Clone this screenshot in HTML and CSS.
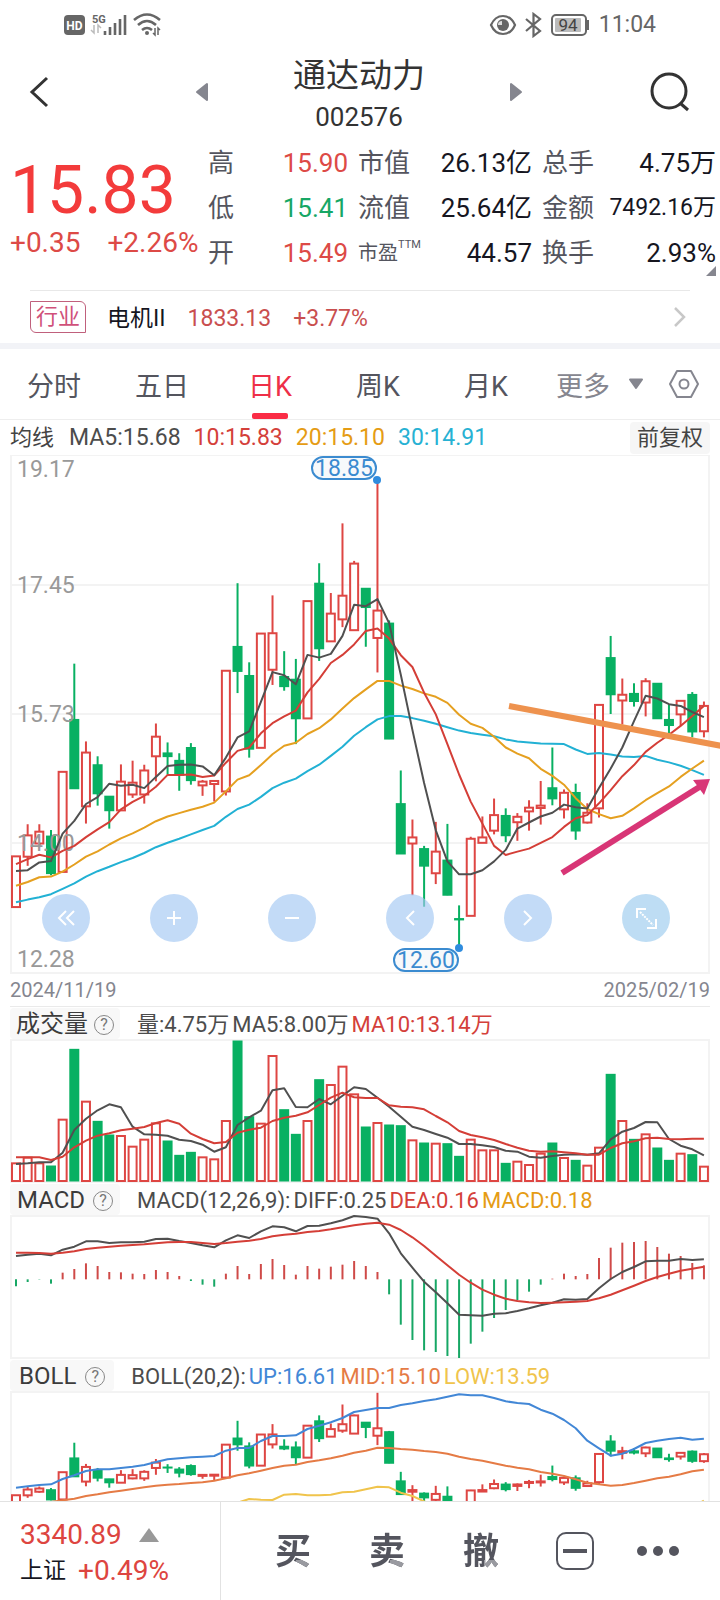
FILE: index.html
```html
<!DOCTYPE html>
<html lang="zh-CN">
<head>
<meta charset="utf-8">
<meta name="viewport" content="width=device-width, initial-scale=1">
<title>通达动力 002576</title>
<link rel="stylesheet" href="styles.css">
</head>
<body>
<div class="app">
  <div class="status">
    <svg class="status-left" viewBox="0 0 102 26" role="img" aria-label="HD 5G WiFi">
      <rect x="1" y="4" width="21" height="20" rx="4" fill="#666"/>
      <text x="11.500" y="18.500" class="hd">HD</text>
      <text x="29" y="12" class="net">5G</text>
      <path d="M31 14v8l-3-3M35 22v-8l3 3" stroke="#bbb" stroke-width="1.500" fill="none"/>
      <path d="M42 24v-4M47 24v-8M52 24V12M57 24V8M62 24V4" stroke="#666" stroke-width="2.600"/>
      <g fill="none" stroke="#666" stroke-width="2.600"><path d="M71 9q13-11 26 0"/><path d="M75 14q9-8 18 0"/><path d="M79 19q5-4 10 0"/></g>
      <circle cx="84" cy="22" r="2" fill="#666"/>
      <path d="M92 17v7l-2-2M95 24v-7l2 2" stroke="#666" stroke-width="1.500" fill="none"/>
    </svg>
    <div class="status-right">
      <svg width="100" height="26" viewBox="0 0 100 26" role="img" aria-label="94%">
        <path d="M2 13Q6 4 14 4Q22 4 26 13Q22 22 14 22Q6 22 2 13Z" fill="none" stroke="#666" stroke-width="2.200"/>
        <circle cx="14" cy="13" r="6" fill="#666"/><path d="M13 13v-4a4 4 0 0 0-4 4z" fill="#ddd"/>
        <path d="M37 7l14 12-6.500 5V2l6.500 5-14 12" fill="none" stroke="#666" stroke-width="2.200"/>
        <rect x="63" y="3" width="34" height="20" rx="4" fill="#fff" stroke="#666" stroke-width="2"/>
        <rect x="66" y="6" width="26" height="14" rx="1" fill="#bbb"/>
        <path d="M99 8v10" stroke="#666" stroke-width="2"/>
        <text x="79" y="19" class="batt">94</text>
      </svg>
      <span>11:04</span>
    </div>
  </div>

  <header class="header">
    <button class="icon-btn" aria-label="返回"><svg width="24" height="32" viewBox="0 0 24 32"><path d="M20 2L5 16l15 14" fill="none" stroke="#333" stroke-width="3"/></svg></button>
    <div class="picker">
      <button class="icon-btn" aria-label="上一只"><svg width="14" height="20" viewBox="0 0 14 20"><path d="M12 2v16L2 10z" fill="#85868f" stroke="#85868f" stroke-width="2" stroke-linejoin="round"/></svg></button>
      <div class="title"><h1>通达动力</h1><p>002576</p></div>
      <button class="icon-btn" aria-label="下一只"><svg width="14" height="20" viewBox="0 0 14 20"><path d="M2 2v16l10-8z" fill="#85868f" stroke="#85868f" stroke-width="2" stroke-linejoin="round"/></svg></button>
    </div>
    <button class="icon-btn" aria-label="搜索"><svg width="42" height="42" viewBox="0 0 42 42"><circle cx="20" cy="20" r="17" fill="none" stroke="#333" stroke-width="3"/><path d="M31 32l8 7" stroke="#333" stroke-width="3"/></svg></button>
  </header>

  <section class="quote">
    <div class="price">
      <strong>15.83</strong>
      <div class="change"><span>+0.35</span><span>+2.26%</span></div>
    </div>
    <dl class="stats">
      <div><dt>高</dt><dd class="up">15.90</dd></div>
      <div><dt>市值</dt><dd>26.13亿</dd></div>
      <div><dt>总手</dt><dd>4.75万</dd></div>
      <div><dt>低</dt><dd class="down">15.41</dd></div>
      <div><dt>流值</dt><dd>25.64亿</dd></div>
      <div><dt>金额</dt><dd class="long">7492.16万</dd></div>
      <div><dt>开</dt><dd class="up">15.49</dd></div>
      <div><dt class="small">市盈<sup>TTM</sup></dt><dd>44.57</dd></div>
      <div><dt>换手</dt><dd>2.93%</dd></div>
    </dl>
    <i class="corner"></i>
  </section>

  <a class="industry" href="#industry">
    <span class="tag">行业</span>
    <span class="info"><span class="sector">电机II</span><span>1833.13</span><span>+3.77%</span></span>
    <svg width="14" height="22" viewBox="0 0 14 22"><path d="M2 2l9 9-9 9" fill="none" stroke="#c8c8c8" stroke-width="2.500"/></svg>
  </a>

  <nav class="tabs">
    <button>分时</button><button>五日</button><button class="active">日K</button><button>周K</button><button>月K</button>
    <button class="more">更多<svg width="16" height="12" viewBox="0 0 16 12"><path d="M2 1.500h12L8 10z" fill="#85868f" stroke="#85868f" stroke-width="2" stroke-linejoin="round"/></svg></button>
    <button class="gear" aria-label="设置"><svg width="32" height="30" viewBox="0 0 32 30"><path d="M9 2h14l7 13-7 13H9L2 15z" fill="none" stroke="#85868f" stroke-width="2" stroke-linejoin="round"/><circle cx="16" cy="15" r="4.500" fill="none" stroke="#85868f" stroke-width="2"/></svg></button>
  </nav>

  <main class="charts">
    <div class="ma-row">
      <p><span class="name">均线</span><span class="dark">MA5:15.68</span><span class="red">10:15.83</span><span class="gold">20:15.10</span><span class="cyan">30:14.91</span></p>
      <button class="adjust">前复权</button>
    </div>
    <div class="kline">
      <svg id="kline" viewBox="0 455 720 519" role="img" aria-label="日K线"></svg>
      <div class="tools">
        <button aria-label="最早"><svg viewBox="0 0 48 48"><path d="M24 17l-7 7 7 7M32 17l-7 7 7 7"/></svg></button>
        <button aria-label="放大"><svg viewBox="0 0 48 48"><path d="M24 17v14M17 24h14"/></svg></button>
        <button aria-label="缩小"><svg viewBox="0 0 48 48"><path d="M17 24h14"/></svg></button>
        <button aria-label="左移"><svg viewBox="0 0 48 48"><path d="M28 17l-7 7 7 7"/></svg></button>
        <button aria-label="右移"><svg viewBox="0 0 48 48"><path d="M20 17l7 7-7 7"/></svg></button>
        <button class="full" aria-label="全屏"><svg viewBox="0 0 48 48"><path d="M15 24v-9h9M25 34h9v-9"/><path d="M18 18l13 13" stroke-width="1" stroke-dasharray="2 1"/></svg></button>
      </div>
    </div>
    <div class="dates"><time>2024/11/19</time><time>2025/02/19</time></div>

    <div class="panel-head">
      <button class="chip chip-volume">成交量<span class="help">?</span></button>
      <p><span class="dark">量:4.75万</span><span class="dark">MA5:8.00万</span><span class="red">MA10:13.14万</span></p>
    </div>
    <svg id="volume" viewBox="0 1039 720 144" role="img" aria-label="成交量"></svg>

    <div class="panel-head">
      <button class="chip">MACD<span class="help">?</span></button>
      <p><span class="dark">MACD(12,26,9):</span><span class="dark">DIFF:0.25</span><span class="red">DEA:0.16</span><span class="gold">MACD:0.18</span></p>
    </div>
    <svg id="macd" viewBox="0 1215 720 144" role="img" aria-label="MACD"></svg>

    <div class="panel-head">
      <button class="chip chip-boll">BOLL<span class="help">?</span></button>
      <p><span class="dark">BOLL(20,2):</span><span class="blue">UP:16.61</span><span class="orange">MID:15.10</span><span class="yellow">LOW:13.59</span></p>
    </div>
    <svg id="boll" viewBox="0 1391 720 144" role="img" aria-label="BOLL"></svg>
  </main>

  <footer class="bottom">
    <a class="index" href="#sh">
      <span class="row">3340.89<svg width="20" height="14" viewBox="0 0 20 14"><path d="M10 0l10 14H0z" fill="#999"/></svg></span>
      <span class="row"><b>上证</b>+0.49%</span>
    </a>
    <div class="actions">
      <button><span class="trade">买</span></button>
      <button><span class="trade">卖</span></button>
      <button><span class="trade">撤</span></button>
      <button aria-label="自选"><svg width="40" height="40" viewBox="0 0 40 40"><rect x="2" y="2" width="36" height="36" rx="9" fill="none" stroke="#54555e" stroke-width="2"/><path d="M8 20h24" stroke="#54555e" stroke-width="4"/></svg></button>
      <button aria-label="更多功能"><svg width="44" height="12" viewBox="0 0 44 12" fill="#54555e"><circle cx="6" cy="6" r="5"/><circle cx="22" cy="6" r="5"/><circle cx="38" cy="6" r="5"/></svg></button>
    </div>
  </footer>
</div>
<script src="chart.js"></script>
</body>
</html>
```

FILE: styles.css
```css
* { box-sizing: border-box; }
body { margin: 0; background: #fff; color: #333; font-family: Roboto, "Noto Sans CJK SC", sans-serif; }
h1, p, dl, dd { margin: 0; font-weight: 400; }
button { margin: 0; padding: 0; border: 0; background: none; font: inherit; color: inherit; }
a { color: inherit; text-decoration: none; }
svg { display: block; }

.app { display: flex; flex-direction: column; height: 100vh; overflow: hidden; }
.app > * { flex: none; }

.status { display: flex; justify-content: space-between; align-items: center; height: 48px; padding: 0 64px 0 63px; color: #666; }
.status-left { width: 102px; height: 26px; }
.status-right { display: flex; align-items: center; gap: 10px; font-size: 23px; line-height: 26px; padding-top: 1px; }
.hd { font: 700 12px Roboto, sans-serif; fill: #fff; text-anchor: middle; }
.net { font: 700 11px Roboto, sans-serif; fill: #666; }
.batt { font: 400 17px Roboto, sans-serif; fill: #444; text-anchor: middle; }

.header { display: grid; grid-template-columns: 1fr 328px 1fr; align-items: center; height: 93px; padding: 0 29px 0 27px; }
.header > .icon-btn:last-child { justify-self: end; }
.picker { display: flex; align-items: center; justify-content: space-between; }
.icon-btn { display: flex; align-items: center; padding-bottom: 6px; }
.title { text-align: center; }
.title h1 { font-size: 33px; line-height: 44px; font-weight: 400; color: #333; }
.title p { font-size: 26px; line-height: 38px; }

.quote { position: relative; display: flex; height: 134px; }
.price { width: 208px; padding: 12px 0 0 10px; color: #f33b3b; white-space: nowrap; }
.price strong { display: block; font-size: 66px; line-height: 76px; font-weight: 400; }
.change { display: flex; gap: 27px; font-size: 28px; line-height: 28px; color: #dd4a46; }
.stats { flex: 1; display: grid; grid-template-columns: 140fr 174fr 174fr; grid-template-rows: repeat(3, 1fr); column-gap: 10px; padding-right: 4px; }
.stats div { display: flex; align-items: center; justify-content: space-between; line-height: 32px; white-space: nowrap; }
.stats dt { font-size: 26px; color: #54555e; }
.stats dt.small { font-size: 20px; }
.stats sup { font-size: 11px; line-height: 11px; vertical-align: 12px; }
.stats dd { font-size: 26px; color: #16161f; }
.stats dd.long { font-size: 23px; }
.stats dd.up { color: #dd4a46; }
.stats dd.down { color: #17a765; }
.corner { position: absolute; right: 4px; bottom: -1px; border: 5px solid #85868f; border-top-color: transparent; border-left-color: transparent; }

.industry { display: flex; align-items: center; height: 53px; margin: 15px 30px 0; border-top: 1px solid #e8e8e8; font-size: 23px; color: #c94f4f; }
.tag { margin-right: 21px; padding: 0 5px; border: 1px solid #c0607c; border-radius: 0 6px 0 6px; font-size: 22px; line-height: 30px; color: #d0517a; }
.info { display: flex; align-items: baseline; gap: 22px; padding-top: 4px; line-height: 32px; }
.sector { font-size: 23px; color: #16161f; }
.industry svg { margin-left: auto; margin-right: 3px; }

.tabs { display: grid; grid-template-columns: repeat(5, 15%) 1fr 72px; height: 77px; border-top: 6px solid #f2f3f7; border-bottom: 1px solid #eee; font-size: 27px; color: #54555e; }
.tabs .active { position: relative; color: #ee2f48; }
.tabs .active::after { content: ""; position: absolute; left: 50%; bottom: 0; width: 36px; height: 6px; margin-left: -18px; border-radius: 2px; background: #fa2c45; }
.tabs .more { display: flex; align-items: center; gap: 18px; padding-left: 16px; color: #85868f; }
.tabs .gear { display: flex; align-items: center; justify-content: center; }

.charts { flex: 1; min-height: 0; overflow: hidden; }
.charts svg { width: 100%; }
.dark { color: #4c4c4c; }
.red { color: #d4403a; }
.gold { color: #e59c14; }
.cyan { color: #27b1d3; }
.blue { color: #4287d6; }
.orange { color: #e57b45; }
.yellow { color: #f0c44c; }

.ma-row { display: flex; align-items: center; justify-content: space-between; height: 35px; padding: 0 10px; }
.ma-row p { display: flex; align-items: baseline; gap: 13px; font-size: 23px; line-height: 32px; }
.ma-row .name { margin-right: 2px; font-size: 22px; color: #444; }
.adjust { padding: 0 7px; border-radius: 4px; background: #f6f6f6; font-size: 22px; line-height: 32px; color: #444; }

.kline { position: relative; }
.tools { position: absolute; left: 0; right: 0; bottom: 32px; height: 48px; }
.tools button { position: absolute; left: 9.1%; width: 48px; height: 48px; margin-left: -24px; border-radius: 50%; background: rgba(163, 199, 243, .65); }
.tools button:nth-child(2) { left: 24.1%; }
.tools button:nth-child(3) { left: 40.5%; }
.tools button:nth-child(4) { left: 56.9%; }
.tools button:nth-child(5) { left: 73.3%; }
.tools button:nth-child(6) { left: 89.7%; }
.tools .full { background: rgba(155, 203, 238, .65); }
.tools path { fill: none; stroke: #fff; stroke-width: 2; }

.axis { font: 23px Roboto, sans-serif; fill: #999; }
.pill { font: 23px Roboto, sans-serif; fill: #3b8bd0; text-anchor: middle; }

.dates { display: flex; justify-content: space-between; height: 33px; margin: 0 10px; border-bottom: 1px solid #eaeaea; font-size: 20px; line-height: 32px; color: #85868f; }

.panel-head { display: flex; align-items: flex-end; gap: 17px; height: 32px; padding: 0 10px; white-space: nowrap; }
.chip { display: flex; align-items: center; gap: 8px; height: 31px; padding: 2px 7px 0; border-radius: 4px; background: #f8f8f8; font-size: 24px; line-height: 29px; color: #3c3c3c; }
.chip-volume { gap: 6px; padding: 2px 6px 0; }
.chip-boll { gap: 9px; padding: 2px 9px 0; }
.help { width: 20px; height: 20px; border: 1px solid #888; border-radius: 50%; font-size: 16px; line-height: 18px; color: #777; text-align: center; }
.panel-head p { display: flex; align-items: baseline; gap: 3px; font-size: 22px; line-height: 28px; }

.bottom { display: flex; height: 99px; border-top: 1px solid #e2e2e2; background: #fff; }
.index { display: flex; flex-direction: column; justify-content: center; width: 221px; padding: 3px 0 0 20px; border-right: 1px solid #e2e2e2; color: #dd4540; }
.row { display: flex; align-items: center; gap: 12px; font-size: 28px; line-height: 36px; }
.row:first-child { gap: 17px; }
.row b { font-size: 23px; font-weight: 400; color: #16161f; }
.actions { flex: 1; display: grid; grid-template-columns: repeat(4, 94fr) 72fr; padding: 0 26px 0 25px; }
.actions button { display: flex; align-items: center; justify-content: center; }
.trade { padding-top: 2px; font-size: 36px; font-weight: 700; line-height: 42px; color: transparent; background: linear-gradient(#999aa0, #999aa0) 100% 31px / 15px 14px no-repeat, #54555e; -webkit-background-clip: text; background-clip: text; }
```

FILE: chart.js
```js
const N = 60;
const X = i => 16 + 11.66 * i;
const C = { up: '#de4643', down: '#08b062', dark: '#505050', red: '#d43e37', gold: '#e5a020', cyan: '#22b1d4', grid: '#f3f3f3' };

// high, body top, body bottom, low (distance down the price scale), direction
const candles = [
  [1202,1202,1352,1352,1],[1107,1140,1203,1230,1],[1107,1129,1164,1175,1],[1124,1142,1253,1258,0],[952,952,1248,1248,1],
  [632,797,1002,1002,0],[862,895,1054,1105,1],[906,931,1017,1052,0],[1024,1024,1067,1120,0],[930,981,1066,1066,1],
  [919,984,1019,1029,1],[931,948,1019,1046,1],[809,848,906,980,1],[865,896,907,960,0],[897,918,962,1008,0],
  [867,880,978,990,0],[976,981,992,1023,1],[979,979,988,1040,1],[653,653,1010,1022,1],[394,581,655,719,0],
  [628,667,885,910,0],[543,543,881,881,1],[430,542,650,695,1],[595,670,700,712,0],[618,678,795,870,0],
  [447,447,794,794,1],[335,394,588,624,0],[423,484,566,566,1],[217,431,501,524,1],[328,336,533,535,1],
  [409,409,466,582,0],[90,475,556,658,1],[504,512,855,855,0],[948,1046,1195,1195,0],[1093,1146,1164,1317,1],
  [1171,1179,1231,1351,0],[1100,1188,1252,1284,1],[1106,1213,1317,1317,0],[1347,1386,1390,1472,0],[1144,1150,1378,1378,1],
  [1084,1146,1162,1162,1],[1031,1080,1126,1137,1],[1060,1081,1141,1160,0],[1074,1085,1101,1156,1],[1036,1058,1069,1126,1],
  [979,1052,1059,1108,1],[880,999,1032,1051,0],[1004,1014,1063,1090,1],[987,1013,1127,1153,0],[1045,1073,1102,1105,1],
  [754,754,1060,1087,1],[550,614,724,781,0],[676,724,741,812,1],[690,720,744,759,0],[675,684,747,788,1],
  [690,690,795,795,0],[752,797,815,838,0],[742,742,782,815,1],[716,723,834,850,0],[744,757,832,850,1]
];
const ma5 = [1245,1243,1220,1216,1135,1097,1047,1027,987,993,990,1000,967,935,931,930,936,962,910,850,832,745,657,666,693,606,614,603,550,458,462,441,512,665,828,985,1125,1217,1255,1255,1243,1217,1183,1120,1102,1084,1073,1049,1057,1060,1000,942,880,802,727,735,752,757,775,790];
const ma10 = [1225,1210,1197,1205,1186,1171,1145,1122,1101,1063,1041,1023,996,961,961,960,967,963,925,890,880,838,808,788,771,717,677,630,606,575,535,528,558,607,642,718,782,870,960,1040,1105,1171,1198,1188,1179,1162,1145,1115,1089,1080,1045,1006,965,932,893,866,842,816,787,757];
const ma20 = [1289,1278,1264,1262,1247,1226,1203,1187,1167,1149,1134,1117,1098,1084,1074,1064,1055,1043,1010,975,962,932,900,875,866,840,823,797,765,734,708,683,683,697,707,720,730,748,783,810,822,848,880,898,912,943,964,990,1030,1062,1077,1089,1082,1060,1036,1015,995,967,942,919];
const ma30 = [1338,1330,1323,1314,1298,1282,1262,1246,1233,1219,1207,1192,1175,1162,1150,1137,1124,1112,1085,1062,1049,1026,1000,984,972,950,931,905,878,845,820,797,787,787,793,801,810,820,830,837,842,847,856,862,865,868,869,870,886,899,896,901,907,908,905,916,924,934,947,961];

const vol = [577,560,577,585,446,235,392,451,492,495,527,506,457,510,553,544,559,565,450,210,437,458,255,416,490,450,326,342,287,370,468,456,462,464,508,516,518,518,556,506,538,538,577,572,582,548,516,561,568,584,530,310,450,505,490,531,568,548,551,587];
const vol5 = [582,580,577,577,548,480,446,421,403,412,470,493,494,497,509,513,524,545,532,465,442,422,361,355,411,412,387,403,377,352,357,383,410,440,470,480,492,503,522,522,526,531,542,545,560,563,558,554,553,554,550,508,485,474,456,457,507,527,538,556];
const vol10 = [562,562,562,570,560,532,512,497,490,481,476,471,459,451,461,491,507,520,516,488,479,473,453,443,437,427,405,383,368,382,384,384,406,410,412,418,438,457,483,495,502,510,522,533,542,545,544,547,550,554,554,534,520,514,505,503,507,508,506,506];

const hist = [304,291,284,296,263,252,235,243,261,262,266,267,255,261,273,288,299,305,266,243,267,237,222,240,269,243,251,245,239,228,243,261,328,419,465,496,501,513,519,476,440,399,375,345,320,299,281,266,273,267,219,188,173,171,168,186,206,213,234,241];
const diff = [213,209,206,211,194,185,169,169,174,172,172,170,162,161,168,174,181,187,166,151,159,139,124,127,139,123,122,115,106,93,96,101,145,205,248,290,322,355,389,391,392,386,385,378,370,361,353,343,344,342,310,282,261,246,229,227,227,222,225,223];
const dea = [203,203,204,206,203,199,192,188,185,182,180,178,175,172,171,171,174,177,174,170,167,162,154,149,146,141,138,133,127,121,116,113,119,135,157,183,212,241,269,293,314,329,341,348,352,354,353,352,350,348,340,329,316,302,288,276,266,257,251,245];

const bUp = [383,379,375,373,357,346,333,328,328,324,320,315,306,298,295,292,290,288,272,264,264,243,228,228,226,207,197,187,174,156,150,144,144,135,130,123,118,110,103,106,106,114,124,129,132,149,161,180,205,242,265,287,281,267,249,242,237,233,239,236];
const bMid = [440,434,429,426,421,416,408,403,397,392,387,382,377,374,372,369,367,362,355,346,340,332,324,317,314,306,301,295,287,278,272,263,264,267,269,273,276,281,290,297,302,310,317,323,328,336,341,348,358,368,373,377,375,369,362,355,350,343,334,329];
const bLow = [520,515,510,506,500,495,490,485,480,475,470,465,460,456,453,450,446,440,434,428,417,419,420,404,402,406,406,404,397,395,388,380,382,398,408,424,440,460,480,500,520,530,540,545,550,550,550,550,545,540,535,530,525,515,500,485,470,455,440,422];

const line = (vals, y, color, w = 2) =>
  `<polyline fill="none" stroke="${color}" stroke-width="${w}" stroke-linejoin="round" points="${vals.map((v, i) => X(i).toFixed(1) + ',' + y(v).toFixed(1)).join(' ')}"/>`;

const bar = (x, top, bottom, up) => up
  ? `<rect x="${x - 4}" y="${top}" width="8" height="${Math.max(bottom - top, 1)}" fill="#fff" stroke="${C.up}" stroke-width="2"/>`
  : `<rect x="${x - 5}" y="${top - 0.5}" width="10" height="${Math.max(bottom - top + 1, 2)}" fill="${C.down}"/>`;

const candleMarks = y => candles.map(([h, t, b, l, up], i) =>
  `<path d="M${X(i)} ${y(h)}V${y(l)}" stroke="${up ? C.up : C.down}" stroke-width="2"/>` + bar(X(i), y(t), y(b), up)).join('');

const frame = (top, bottom) => `<rect x="11" y="${top}" width="698" height="${bottom - top}" fill="none" stroke="${C.grid}" stroke-width="2"/>`;

function drawKline() {
  const y = v => 450 + v / 2.958;
  let s = frame(455, 973);
  [585, 714, 843].forEach(g => { s += `<path d="M11 ${g}H709" stroke="${C.grid}" stroke-width="2"/>`; });
  s += candleMarks(y);
  [['19.17', 477], ['17.45', 593], ['15.73', 722], ['14.00', 851], ['12.28', 967]].forEach(([t, ty]) => {
    s += `<text class="axis" x="17" y="${ty}">${t}</text>`;
  });
  s += line(ma30, y, C.cyan) + line(ma20, y, C.gold) + line(ma10, y, C.red) + line(ma5, y, C.dark);
  [[344, 457, '18.85', 377, 480], [426, 949, '12.60', 459, 948]].forEach(([cx, top, t, dx, dy]) => {
    s += `<rect x="${cx - 32}" y="${top}" width="64" height="22" rx="11" fill="#f7f9fb" stroke="#3b8bd0" stroke-width="2"/>`
      + `<text class="pill" x="${cx}" y="${top + 19}">${t}</text><circle cx="${dx}" cy="${dy}" r="4" fill="#2f8cde"/>`;
  });
  s += '<path d="M509 706L722 746" stroke="#ee924e" stroke-width="6"/>'
    + '<path d="M562 873L701 786" stroke="#d83576" stroke-width="6"/><path d="M710 779l-17 1 11 15z" fill="#d83576"/>';
  document.getElementById('kline').innerHTML = s;
}

function drawVolume() {
  const y = v => 970 + v / 3;
  let s = frame(1040, 1182);
  for (let i = 0; i < N; i++) s += bar(X(i), y(vol[i]) + 1, 1181, candles[i][4]);
  document.getElementById('volume').innerHTML = s + line(vol5, y, C.dark) + line(vol10, y, C.red);
}

function drawMacd() {
  const y = v => 1185 + v / 3;
  let s = frame(1216, 1358);
  hist.forEach((v, i) => { s += `<path d="M${X(i)} ${y(283)}V${y(v)}" stroke="${v < 283 ? '#cf4a48' : '#17a765'}" stroke-width="2"/>`; });
  document.getElementById('macd').innerHTML = s + line(diff, y, C.dark) + line(dea, y, C.red);
}

function drawBoll() {
  const y = v => 1360 + v / 3;
  const price = v => y(215 + (v - 512) * 0.27637);
  document.getElementById('boll').innerHTML = frame(1392, 1534) + candleMarks(price)
    + line(bUp, y, '#4287d6') + line(bMid, y, '#e57b45') + line(bLow, y, '#f0c44c');
}

drawKline();
drawVolume();
drawMacd();
drawBoll();
```
